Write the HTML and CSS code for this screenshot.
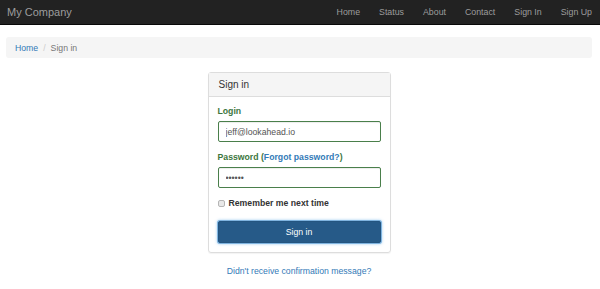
FILE: index.html
```html
<!DOCTYPE html>
<html lang="en">
<head>
  <meta charset="UTF-8">
  <title>Sign in</title>
  <link rel="stylesheet" href="styles.css">
</head>
<body>
<!-- top navigation -->
<nav class="navbar">
  <a href="#" class="brand">My Company</a>
  <ul class="nav-links">
    <li><a href="#">Home</a></li>
    <li><a href="#">Status</a></li>
    <li><a href="#">About</a></li>
    <li><a href="#">Contact</a></li>
    <li><a href="#">Sign In</a></li>
    <li><a href="#">Sign Up</a></li>
  </ul>
</nav>

<div class="container">
  <ol class="breadcrumb">
    <li><a href="#">Home</a></li>
    <li class="sep">/</li>
    <li class="active">Sign in</li>
  </ol>

  <!-- sign in form -->
  <div class="panel">
    <div class="panel-heading">Sign in</div>
    <form class="panel-body">
      <div class="form-group">
        <label for="login">Login</label>
        <input type="text" id="login" class="form-control" value="jeff@lookahead.io">
      </div>
      <div class="form-group">
        <label for="password">Password (<a href="#">Forgot password?</a>)</label>
        <input type="password" id="password" class="form-control" value="123456">
      </div>
      <label class="checkbox">
        <input type="checkbox"> Remember me next time
      </label>
      <button type="button" class="btn-primary">Sign in</button>
    </form>
  </div>

  <p class="resend"><a href="#">Didn't receive confirmation message?</a></p>
</div>
</body>
</html>
```

FILE: styles.css
```css
body {
  margin: 0;
  padding: 0;
  font-family: "Liberation Sans", Arial, sans-serif;
  font-size: 8.7px;
  color: #333;
  background-color: #fff;
}
a {
  color: #337ab7;
  text-decoration: none;
}

.navbar {
  display: flex;
  align-items: center;
  justify-content: space-between;
  height: 24px;
  background-color: #222;
  border-bottom: 1px solid #080808;
  padding: 0 0 0 7px;
}
.brand {
  color: #9d9d9d;
  font-size: 11px;
}
.nav-links {
  display: flex;
  list-style: none;
  margin: 0;
  padding: 0 8px 0 0;
}
.nav-links a {
  display: block;
  padding: 0 9.5px;
  color: #9d9d9d;
  font-size: 8.8px;
}
.nav-links li:last-child a {
  padding-right: 0;
}

.container {
  padding: 0 8px 0 6px;
}
.breadcrumb {
  display: flex;
  align-items: center;
  gap: 5px;
  list-style: none;
  margin: 12px 0 0;
  padding: 0 9px;
  height: 21px;
  background-color: #f5f5f5;
  border-radius: 3px;
}
.breadcrumb .sep {
  color: #ccc;
}
.breadcrumb .active {
  color: #777;
}

.panel {
  width: 181px;
  margin: 14px auto 0;
  border: 1px solid #ddd;
  border-radius: 3px;
  box-shadow: 0 1px 1px rgba(0, 0, 0, 0.05);
}
.panel-heading {
  display: flex;
  align-items: center;
  height: 23px;
  padding: 0 10px;
  background-color: #f5f5f5;
  border-bottom: 1px solid #ddd;
  font-size: 10px;
}
.panel-body {
  display: flex;
  flex-direction: column;
  padding: 8px 9px 9px;
  margin: 0;
}
.form-group {
  display: flex;
  flex-direction: column;
  margin-bottom: 9px;
}
.form-group label {
  font-weight: bold;
  color: #3c763d;
  line-height: 13px;
  margin-bottom: 3px;
}
.form-control {
  box-sizing: border-box;
  height: 21px;
  width: 100%;
  margin: 0;
  padding: 0 7px;
  border: 1px solid #4a7f4b;
  border-radius: 2px;
  box-shadow: inset 0 1px 1px rgba(0, 0, 0, 0.075);
  font-family: inherit;
  font-size: 8.7px;
  color: #555;
  outline: none;
}
.checkbox {
  display: flex;
  align-items: center;
  gap: 4px;
  font-weight: bold;
  line-height: 13px;
  margin-bottom: 11px;
}
.checkbox input {
  appearance: none;
  width: 7px;
  height: 7px;
  margin: 0;
  border: 1px solid #b5b5b5;
  border-radius: 2px;
  background-color: #e8e8e8;
}
.btn-primary {
  height: 22px;
  width: 100%;
  background-color: #265a88;
  border: 1px solid #245580;
  border-radius: 2px;
  color: #fff;
  font-family: inherit;
  font-size: 8.7px;
  box-shadow: 0 0 0 1px #7fb4e0, 0 0 3px 1px rgba(102, 175, 233, 0.6);
  cursor: pointer;
}

.resend {
  text-align: center;
  margin: 12px 0 0;
  line-height: 13px;
}
```
